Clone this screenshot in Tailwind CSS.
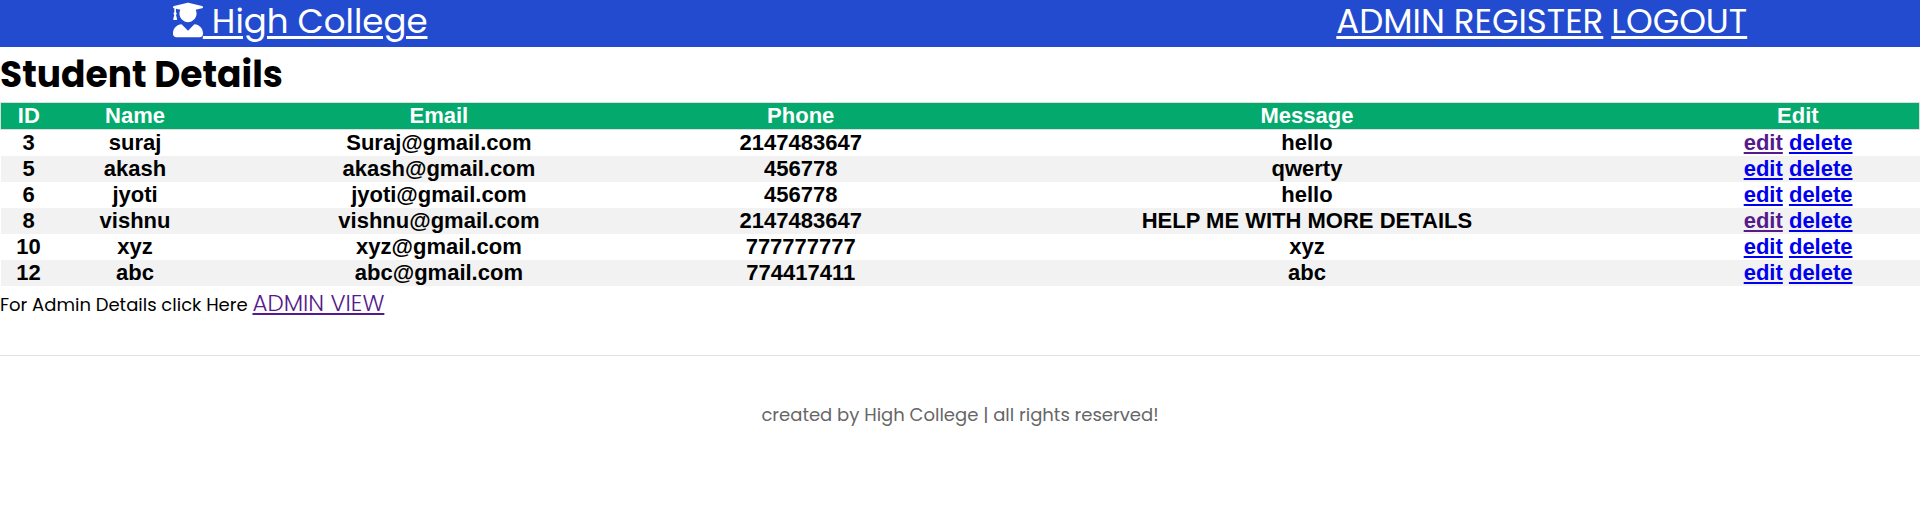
<!DOCTYPE html>
<html lang="en">
<head>
<meta charset="utf-8">
<title>Student Details</title>
<script src="https://cdn.jsdelivr.net/npm/@tailwindcss/browser@4"></script>
</head>
<body class="bg-white font-[Poppins,Inter,sans-serif] text-black">
<header class="flex items-center justify-between bg-[#224bd0] px-[9%] pb-1 text-white">
  <a href="#" class="flex items-start text-[34px] leading-[43px] underline decoration-3 underline-offset-3">
    <svg class="mt-[2px] h-9 w-[30px]" viewBox="0 0 448 512" fill="currentColor" aria-hidden="true"><path d="M319.4 320.6L224 416l-95.4-95.4C57.1 323.7 0 382.2 0 454.4v9.6c0 26.5 21.5 48 48 48h352c26.5 0 48-21.5 48-48v-9.6c0-72.2-57.1-130.7-128.6-133.8zM13.6 79.8l6.4 1.5v58.4c-7 4.2-12 11.5-12 20.3 0 8.4 4.6 15.4 11.1 19.7L3.5 242c-1.7 6.9 2.1 14 7.6 14h41.8c5.5 0 9.3-7.1 7.6-14l-15.6-62.3C51.4 175.4 56 168.4 56 160c0-8.8-5-16.1-12-20.3V87.1l66 15.9c-8.6 17.2-14 36.4-14 57 0 70.7 57.3 128 128 128s128-57.3 128-128c0-20.6-5.3-39.8-14-57l96.3-23.2c18.2-4.4 18.2-27.1 0-31.5l-190.4-46c-13-3.1-26.7-3.1-39.7 0L13.6 48.2c-18.1 4.4-18.1 27.2 0 31.6z"/></svg>
    <span>&nbsp;High College</span>
  </a>
  <nav class="flex gap-2 text-[34px] leading-[43px] underline-offset-3">
    <a href="#" class="underline decoration-3">ADMIN REGISTER</a>
    <a href="#" class="underline decoration-3">LOGOUT</a>
  </nav>
</header>
<main>
  <h1 class="text-[36px] leading-[55px] font-bold">Student Details</h1>
  <table class="w-full table-fixed border-collapse text-center font-[Arial,'Liberation_Sans',sans-serif] text-[22px] leading-[26px] font-bold">
    <colgroup>
      <col class="w-[2.92%]"><col class="w-[8.18%]"><col class="w-[23.49%]"><col class="w-[14.22%]"><col class="w-[38.54%]"><col class="w-[12.65%]">
    </colgroup>
    <thead class="border border-[#dddddd] bg-[#04aa6d] text-white">
      <tr><th>ID</th><th>Name</th><th>Email</th><th>Phone</th><th>Message</th><th>Edit</th></tr>
    </thead>
    <tbody class="[&_a]:text-[#0000ee] [&_a]:underline [&_a]:decoration-2 [&_a]:underline-offset-2 [&_a.seen]:text-[#551a8b] [&_tr:nth-child(even)]:bg-[#f2f2f2]">
      <tr><td>3</td><td>suraj</td><td>Suraj@gmail.com</td><td>2147483647</td><td>hello</td><td><a class="seen" href="#">edit</a> <a href="#">delete</a></td></tr>
      <tr><td>5</td><td>akash</td><td>akash@gmail.com</td><td>456778</td><td>qwerty</td><td><a href="#">edit</a> <a href="#">delete</a></td></tr>
      <tr><td>6</td><td>jyoti</td><td>jyoti@gmail.com</td><td>456778</td><td>hello</td><td><a href="#">edit</a> <a href="#">delete</a></td></tr>
      <tr><td>8</td><td>vishnu</td><td>vishnu@gmail.com</td><td>2147483647</td><td>HELP ME WITH MORE DETAILS</td><td><a class="seen" href="#">edit</a> <a href="#">delete</a></td></tr>
      <tr><td>10</td><td>xyz</td><td>xyz@gmail.com</td><td>777777777</td><td>xyz</td><td><a href="#">edit</a> <a href="#">delete</a></td></tr>
      <tr><td>12</td><td>abc</td><td>abc@gmail.com</td><td>774417411</td><td>abc</td><td><a href="#">edit</a> <a href="#">delete</a></td></tr>
    </tbody>
  </table>
  <p class="text-[18px] leading-[35px]">For Admin Details click Here <a href="#" class="text-[23px] font-light text-[#551a8b] underline decoration-2 underline-offset-2">ADMIN VIEW</a></p>
</main>
<footer class="mt-[33px] border-t border-[#e2e2e2] py-[47px] text-center text-[18px] leading-6 text-[#666666]">created by High College | all rights reserved!</footer>
</body>
</html>
